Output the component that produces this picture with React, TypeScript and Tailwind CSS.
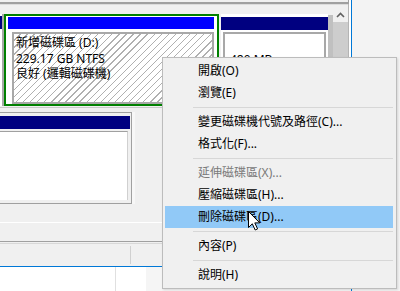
import React from 'react'

type MenuEntry = { label: string; disabled?: boolean; active?: boolean } | 'sep'

const menuItems: MenuEntry[] = [
  { label: '開啟(O)' },
  { label: '瀏覽(E)' },
  'sep',
  { label: '變更磁碟機代號及路徑(C)...' },
  { label: '格式化(F)...' },
  'sep',
  { label: '延伸磁碟區(X)...', disabled: true },
  { label: '壓縮磁碟區(H)...' },
  { label: '刪除磁碟區(D)...', active: true },
  'sep',
  { label: '內容(P)' },
  'sep',
  { label: '說明(H)' },
]

const ContextMenu: React.FC = () => (
  <div className="absolute left-[162px] top-[57px] w-[235px] h-[232px] bg-[#f0f0f0] border border-[#bcbcbc] pt-[2px] pb-[2px] pl-[2px] pr-[3px] shadow-[1px_1px_2px_rgba(0,0,0,0.12)]">
    {menuItems.map((item, i) =>
      item === 'sep' ? (
        <div key={i} className="h-[7px] flex items-center pl-[28px]">
          <div className="h-px w-full bg-[#d7d7d7]" />
        </div>
      ) : (
        <div
          key={i}
          className={`h-[22px] flex items-center pl-[33px] text-[12px] leading-[22px] whitespace-nowrap ${
            item.active ? 'bg-[#91c9f7]' : ''
          } ${item.disabled ? 'text-[#7a7a7a]' : 'text-black'}`}
        >
          {item.label}
        </div>
      )
    )}
  </div>
)

const Cursor: React.FC = () => (
  <svg className="absolute left-[248px] top-[211px]" width="13" height="20" viewBox="0 0 13 20">
    <path
      d="M0.5 0.5 L0.5 16.5 L4.3 12.8 L7.2 19 L9.6 17.9 L6.8 11.9 L11.8 11.9 Z"
      fill="#ffffff"
      stroke="#000000"
      strokeWidth="1"
      strokeLinejoin="miter"
    />
  </svg>
)

const App: React.FC = () => {
  return (
    <div className="relative w-[400px] h-[291px] overflow-hidden flex bg-[#f3f3f3] font-['Noto_Sans','Noto_Sans_CJK_TC',sans-serif] text-black">
      {/* Disk management window */}
      <div className="w-[351px] h-full flex flex-col">
        {/* Upper pane edge */}
        <div className="flex h-[4px]">
          <div className="w-[349px] h-full bg-[#f0f0f0] border-b-2 border-r border-[#a0a0a0]" />
          <div className="flex-1 bg-white" />
        </div>

        {/* Graphical view */}
        <div className="flex h-[237px]">
          <div className="w-[333px] flex flex-col bg-[#f0f0f0] border-t border-t-[#dcdcdc] overflow-hidden">
            {/* Disk row 1 */}
            <div className="flex h-[92px] mt-[9px] shrink-0">
              <div className="w-[4px] h-full flex flex-col border-r-2 border-[#a8a8a8] bg-white">
                <div className="h-[13px] mt-[2px] bg-[#000080]" />
              </div>
              <div className="w-[215px] h-full border-2 border-[#008000] bg-white pt-px flex flex-col">
                <div className="h-[12px] ml-[2px] mr-[3px] bg-[#0000ff]" />
                <div className="flex-1 mt-[3px] ml-[6px] mr-[3px] border-2 border-[#a8a8a8] bg-[repeating-linear-gradient(135deg,#ffffff_0px,#ffffff_4px,#b0b0b0_4px,#b0b0b0_5px)] pl-[2px] pt-px text-[12px] leading-[15.5px] whitespace-nowrap">
                  <div>新增磁碟區 (D:)</div>
                  <div>229.17 GB NTFS</div>
                  <div>良好 (邏輯磁碟機)</div>
                </div>
              </div>
              <div className="w-[2px]" />
              <div className="w-[112px] h-full flex">
                <div className="w-[107px] h-full flex flex-col bg-white">
                  <div className="h-[13px] mt-[3px] bg-[#000080]" />
                  <div className="flex-1 mt-[2px] mx-[2px] mb-[2px] border-2 border-[#a8a8a8] bg-white pl-[5px] pt-[2px] text-[12px] leading-[15.5px] whitespace-nowrap">
                    <div>&nbsp;</div>
                    <div>480 MB</div>
                  </div>
                </div>
                <div className="flex-1 mt-px bg-[#c0c0c0]" />
              </div>
            </div>

            <div className="h-px mt-[1px] bg-[#c8c8c8] shrink-0" />

            {/* Disk row 2 */}
            <div className="flex h-[92px] mt-[4px] shrink-0">
              <div className="w-[132px] h-full flex flex-col bg-[#f0f0f0] border-t border-r border-b border-[#a0a0a0] pt-[3px] pr-px">
                <div className="h-[13px] bg-[#000080]" />
                <div className="flex-1 mt-[2px] mr-[2px] mb-[3px] bg-white border-t border-t-[#a0a0a0] border-r border-r-[#d0d0d0]" />
              </div>
              <div className="w-[3px] bg-[#f7f7f7]" />
            </div>

            <div className="h-px mt-[18px] bg-white shrink-0" />
          </div>

          {/* Vertical scrollbar */}
          <div className="w-[15px] h-full flex flex-col bg-[#f0f0f0] border-t border-t-[#dcdcdc]">
            <div className="h-[17px] flex items-center justify-center pt-[3px]">
              <svg width="9" height="6" viewBox="0 0 9 6">
                <path d="M1 5 L4.5 1.5 L8 5" fill="none" stroke="#606060" strokeWidth="1.6" />
              </svg>
            </div>
            <div className="h-[190px] w-full bg-[#cdcdcd]" />
          </div>
          <div className="w-px h-full bg-[#b4b4b4]" />
          <div className="w-[2px] h-full bg-white" />
        </div>

        {/* Status area */}
        <div className="h-px bg-[#a0a0a0]" />
        <div className="h-px bg-[#f0f0f0]" />
        <div className="h-px bg-[#d8d8d8]" />
        <div className="flex h-[22px] bg-[#f0f0f0]">
          <div className="w-[130px]" />
          <div className="w-px my-[2px] bg-[#d0d0d0]" />
          <div className="flex-1" />
        </div>
        <div className="h-px bg-[#0078d7]" />
        <div className="flex flex-1">
          <div className="w-[115px] bg-white" />
          <div className="w-px bg-[#e0e0e0]" />
          <div className="w-[30px] bg-white" />
          <div className="flex-1 bg-[#f5f5f5]" />
        </div>
      </div>

      <div className="w-px h-full bg-[#0078d7]" />
      <div className="flex-1 h-full bg-[#f3f3f3]" />

      <ContextMenu />
      <Cursor />
    </div>
  )
}

export default App
